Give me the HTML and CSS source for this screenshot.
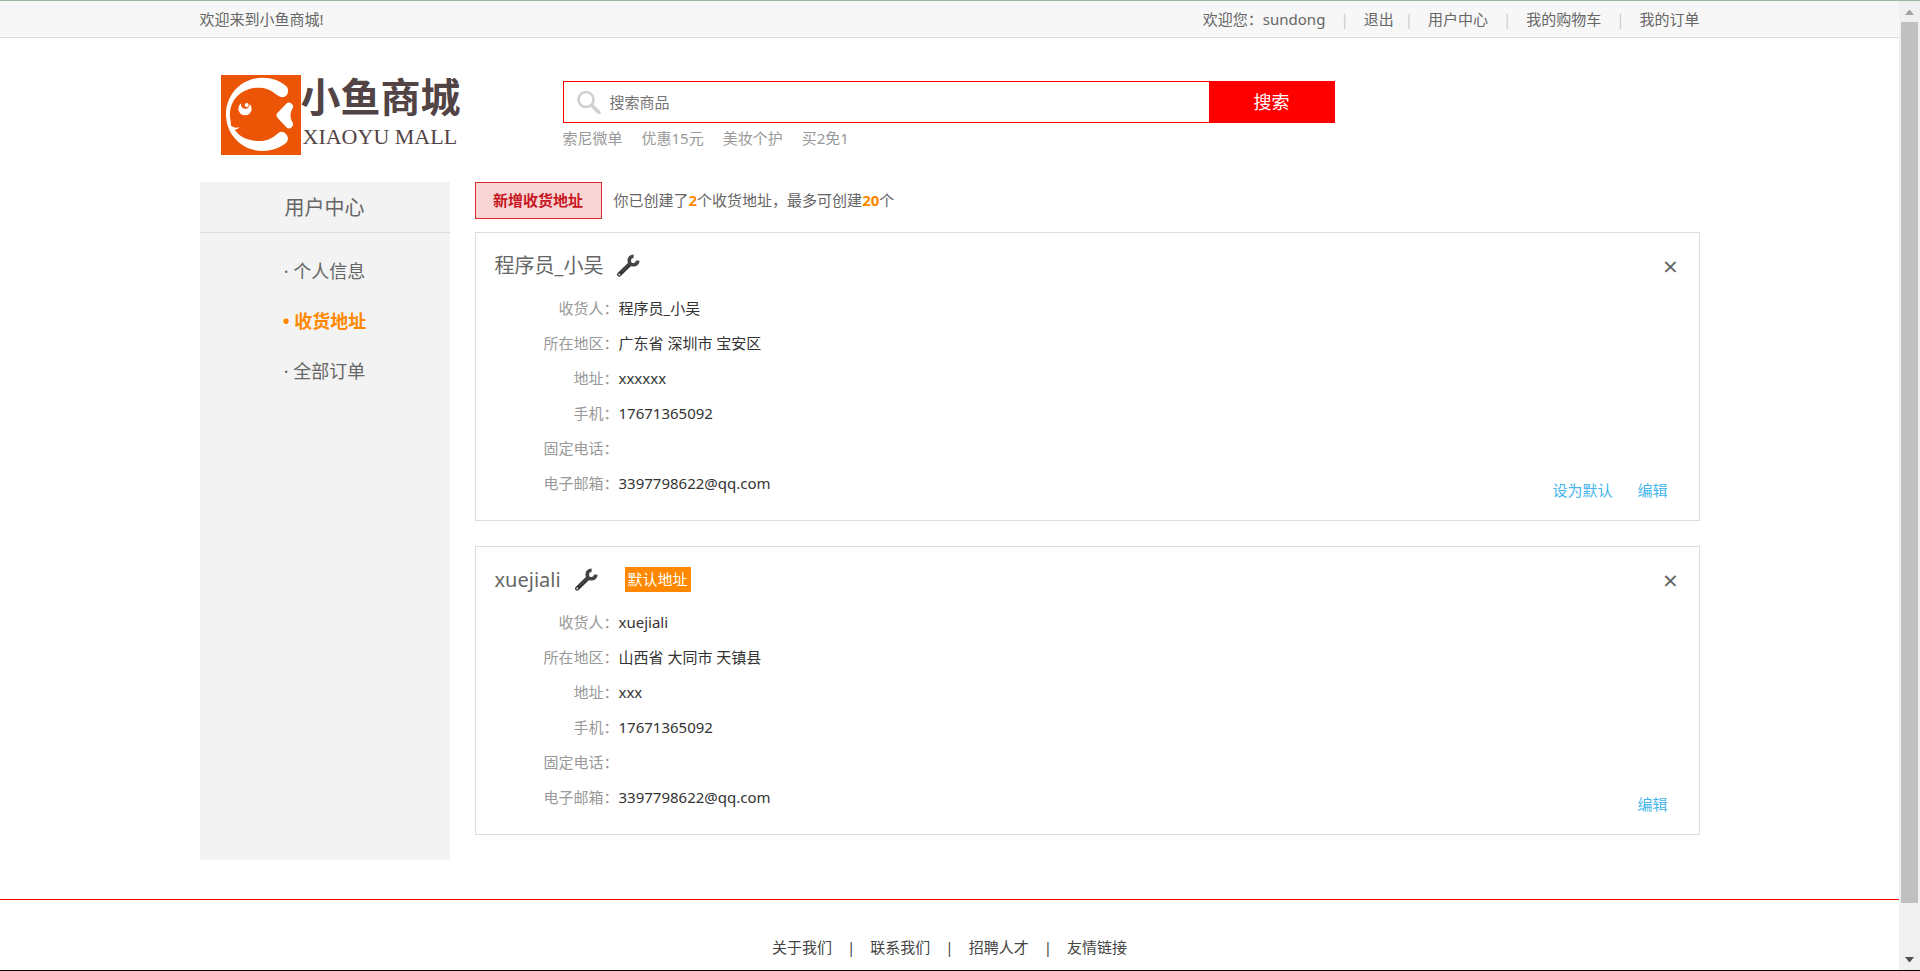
FILE: index.html
```html
<!DOCTYPE html>
<html lang="zh-CN">
<head>
<meta charset="utf-8">
<title>小鱼商城 - 用户中心</title>
<link rel="stylesheet" href="styles.css">
</head>
<body>
<svg class="defs" aria-hidden="true">
  <symbol id="wrench" viewBox="0 0 24 24">
    <path d="M3.200 20.500 13.500 10.500" stroke="#333" stroke-width="4.400" stroke-linecap="round"/>
    <path d="M17.600 2.200A4.300 4.300 0 1 0 21.800 6.600" fill="none" stroke="#444" stroke-width="3.600"/>
    <path d="M6 17.500 13 10.500" stroke="#666" stroke-width="1"/>
    <circle cx="3.300" cy="20.500" r="1" fill="#ddd"/>
  </symbol>
</svg>
<div class="page">
  <header>
    <div class="topbar">
      <div class="container topbar-inner">
        <span>欢迎来到小鱼商城!</span>
        <nav class="user-nav">
          <span>欢迎您：<a href="#">sundong</a></span>
          <span class="sep">|</span>
          <a href="#" class="logout">退出</a>
          <span class="sep">|</span>
          <a href="#">用户中心</a>
          <span class="sep">|</span>
          <a href="#">我的购物车</a>
          <span class="sep">|</span>
          <a href="#">我的订单</a>
        </nav>
      </div>
    </div>
    <div class="container masthead">
      <a href="#" class="logo">
        <svg class="logo-mark" viewBox="0 0 240 240" aria-hidden="true">
          <rect width="240" height="240" fill="#eb5505"/>
          <path d="M196 34C176 16 152 8 125 8C64 8 15 56 15 118C15 180 64 228 125 228C155 228 180 218 197 202C207 189 196 170 180 170C168 172 156 198 115 198C72 198 48 178 41 163C47 164 53 161 55 156C46 160 37 158 29 151C32 140 25 130 27 114C30 66 70 38 115 38C150 38 164 61 180 66C198 70 208 48 196 34Z" fill="#fff"/>
          <circle cx="72" cy="101" r="20" fill="#fff"/>
          <circle cx="73" cy="88" r="13" fill="#eb5505"/>
          <circle cx="77" cy="90" r="6" fill="#fff"/>
          <path d="M204 95 179 121 204 148Q188 121 204 95Z" fill="#fff" stroke="#fff" stroke-width="24" stroke-linejoin="round"/>
        </svg>
        <span class="logo-text">
          <span class="logo-cn">小鱼商城</span>
          <span class="logo-en">XIAOYU MALL</span>
        </span>
      </a>
      <div class="search">
        <form class="search-form">
          <label class="search-field">
            <svg class="search-icon" viewBox="0 0 24 24" aria-hidden="true">
              <circle cx="9" cy="9.500" r="7.500" fill="none" stroke="#d0d0d0" stroke-width="2.600"/>
              <path d="M15 15.500 22 22.500" stroke="#d0d0d0" stroke-width="3.600" stroke-linecap="round"/>
            </svg>
            <input type="text" placeholder="搜索商品" aria-label="搜索商品">
          </label>
          <button type="button" class="search-btn">搜索</button>
        </form>
        <div class="hot">
          <a href="#">索尼微单</a>
          <a href="#">优惠15元</a>
          <a href="#">美妆个护</a>
          <a href="#">买2免1</a>
        </div>
      </div>
    </div>
  </header>

  <div class="container columns">
    <aside class="sidebar">
      <h2>用户中心</h2>
      <nav class="side-menu">
        <a href="#">· 个人信息</a>
        <a href="#" class="active">• 收货地址</a>
        <a href="#">· 全部订单</a>
      </nav>
    </aside>
    <main class="content">
      <div class="toolbar">
        <button type="button" class="add-btn">新增收货地址</button>
        <span>你已创建了<b>2</b>个收货地址，最多可创建<b>20</b>个</span>
      </div>

      <section class="card">
        <div class="card-head">
          <h3>程序员_小吴</h3>
          <button type="button" class="wrench" aria-label="修改标题"><svg><use href="#wrench"/></svg></button>
          <button type="button" class="close" aria-label="删除">×</button>
        </div>
        <div class="card-body">
          <dl>
            <dt>收货人：</dt><dd>程序员_小吴</dd>
            <dt>所在地区：</dt><dd>广东省 深圳市 宝安区</dd>
            <dt>地址：</dt><dd>xxxxxx</dd>
            <dt>手机：</dt><dd>17671365092</dd>
            <dt>固定电话：</dt><dd></dd>
            <dt>电子邮箱：</dt><dd>3397798622@qq.com</dd>
          </dl>
          <div class="actions"><a href="#">设为默认</a><a href="#">编辑</a></div>
        </div>
      </section>

      <section class="card">
        <div class="card-head">
          <h3>xuejiali</h3>
          <button type="button" class="wrench" aria-label="修改标题"><svg><use href="#wrench"/></svg></button>
          <span class="badge">默认地址</span>
          <button type="button" class="close" aria-label="删除">×</button>
        </div>
        <div class="card-body">
          <dl>
            <dt>收货人：</dt><dd>xuejiali</dd>
            <dt>所在地区：</dt><dd>山西省 大同市 天镇县</dd>
            <dt>地址：</dt><dd>xxx</dd>
            <dt>手机：</dt><dd>17671365092</dd>
            <dt>固定电话：</dt><dd></dd>
            <dt>电子邮箱：</dt><dd>3397798622@qq.com</dd>
          </dl>
          <div class="actions"><a href="#">编辑</a></div>
        </div>
      </section>
    </main>
  </div>

  <footer class="footer">
    <a href="#">关于我们</a>
    <span>|</span>
    <a href="#">联系我们</a>
    <span>|</span>
    <a href="#">招聘人才</a>
    <span>|</span>
    <a href="#">友情链接</a>
  </footer>
</div>
<div class="scrollbar" aria-hidden="true">
  <svg class="arrow" viewBox="0 0 21 21"><path d="M6 14h9l-4-5h-1z" fill="#a3a3a3"/></svg>
  <div class="track"><div class="thumb"></div></div>
  <svg class="arrow" viewBox="0 0 21 21"><path d="M6 8h9l-4 5h-1z" fill="#505050"/></svg>
</div>
</body>
</html>
```
FILE: styles.css
```css
* {
  box-sizing: border-box;
}

body {
  display: flex;
  min-height: 100vh;
  margin: 0;
  border-top: 1px solid #9fb59f;
  border-bottom: 1px solid #000;
  background: #fff;
  color: #666;
  font: 15px/22px "Noto Sans", "Noto Sans CJK SC", sans-serif;
}

a {
  color: inherit;
  text-decoration: none;
}

button,
input {
  margin: 0;
  padding: 0;
  border: 0;
  background: none;
  color: inherit;
  font: inherit;
}

button {
  cursor: pointer;
}

h2,
h3,
dl,
dd {
  margin: 0;
  font-weight: 400;
}

.defs {
  position: absolute;
  width: 0;
  height: 0;
}

.page {
  flex: 1;
  min-width: 0;
}

.container {
  width: 100%;
  max-width: 1500px;
  margin: 0 auto;
}

/* top bar */
.topbar {
  border-bottom: 1px solid #ddd;
  background: #f7f7f7;
}

.topbar-inner {
  display: flex;
  align-items: center;
  justify-content: space-between;
  height: 36px;
}

.user-nav {
  display: flex;
  gap: 15px;
}

.sep {
  color: #ccc;
}

.logout {
  margin-right: -4px;
}

/* logo and search */
.masthead {
  display: flex;
  align-items: flex-start;
  height: 144px;
  padding: 37px 0 0 21px;
}

.logo {
  display: flex;
  width: 342px;
}

.logo-mark {
  width: 80px;
  height: 80px;
}

.logo-text {
  display: flex;
  flex-direction: column;
  color: #524344;
}

.logo-cn {
  font-size: 40px;
  font-weight: 700;
  line-height: 44px;
}

.logo-en {
  padding-left: 2px;
  font: 22px/36px "Liberation Serif", serif;
}

.search {
  width: 772px;
  padding-top: 6px;
}

.search-form {
  display: flex;
  height: 42px;
}

.search-field {
  display: flex;
  flex: 1;
  align-items: center;
  gap: 9px;
  padding-left: 13px;
  border: 1px solid #f00;
  border-right: 0;
}

.search-icon {
  width: 24px;
  height: 24px;
}

.search-field input {
  flex: 1;
  outline: 0;
}

.search-field input::placeholder {
  color: #757575;
  opacity: 1;
}

.search-btn {
  width: 126px;
  background: #f00;
  color: #fff;
  font-size: 18px;
}

.hot {
  display: flex;
  gap: 19px;
  padding-top: 4px;
  color: #999;
}

/* columns */
.columns {
  display: flex;
  gap: 25px;
}

.sidebar {
  width: 250px;
  background: #f3f3f3;
}

.sidebar h2 {
  padding-top: 2px;
  border-bottom: 1px solid #ddd;
  font-size: 20px;
  line-height: 48px;
  text-align: center;
}

.side-menu {
  display: flex;
  flex-direction: column;
  padding-top: 13px;
  font-size: 18px;
  line-height: 50px;
  text-align: center;
}

.side-menu .active {
  color: #ff8800;
  font-weight: 700;
}

.content {
  flex: 1;
  min-width: 0;
}

.toolbar {
  display: flex;
  align-items: center;
  gap: 12px;
  margin-bottom: 13px;
}

.toolbar span {
  padding-bottom: 2px;
}

.toolbar b {
  color: #ff8800;
}

.add-btn {
  width: 127px;
  height: 37px;
  padding-bottom: 2px;
  border: 1px solid #d92a2e;
  background: #f7d5d5;
  color: #c71622;
  font-weight: 700;
}

/* address cards */
.card {
  margin-bottom: 25px;
  padding: 7px 19px 19px;
  border: 1px solid #ddd;
}

.card-head {
  display: flex;
  align-items: center;
  height: 51px;
}

.card-head h3 {
  font-size: 20px;
}

.wrench {
  width: 24px;
  height: 24px;
  margin-left: 13px;
}

.wrench svg {
  display: block;
  width: 24px;
  height: 24px;
}

.badge {
  margin-left: 27px;
  padding: 1px 3px 2px;
  background: #ff8800;
  color: #fff;
}

.close {
  width: 18px;
  margin-left: auto;
  font-size: 26px;
}

.card-body {
  display: flex;
  align-items: flex-end;
  justify-content: space-between;
  padding-right: 12px;
}

.card dl {
  display: grid;
  grid-template-columns: 124px auto;
  grid-auto-rows: 35px;
  line-height: 35px;
}

.card dt {
  color: #999;
  text-align: right;
}

.card dd {
  color: #333;
}

.actions {
  display: flex;
  gap: 25px;
  color: #45b5ec;
}

/* footer */
.footer {
  display: flex;
  justify-content: center;
  gap: 15px;
  margin-top: 39px;
  padding-top: 36px;
  border-top: 1px solid #f00;
  color: #444;
}

/* scroll bar */
.scrollbar {
  display: flex;
  flex-direction: column;
  width: 21px;
  background: #f0f0f0;
}

.arrow {
  width: 21px;
  height: 21px;
}

.track {
  flex: 1;
  padding: 0 2px;
}

.thumb {
  height: 95%;
  background: #c0c0c0;
}
```
